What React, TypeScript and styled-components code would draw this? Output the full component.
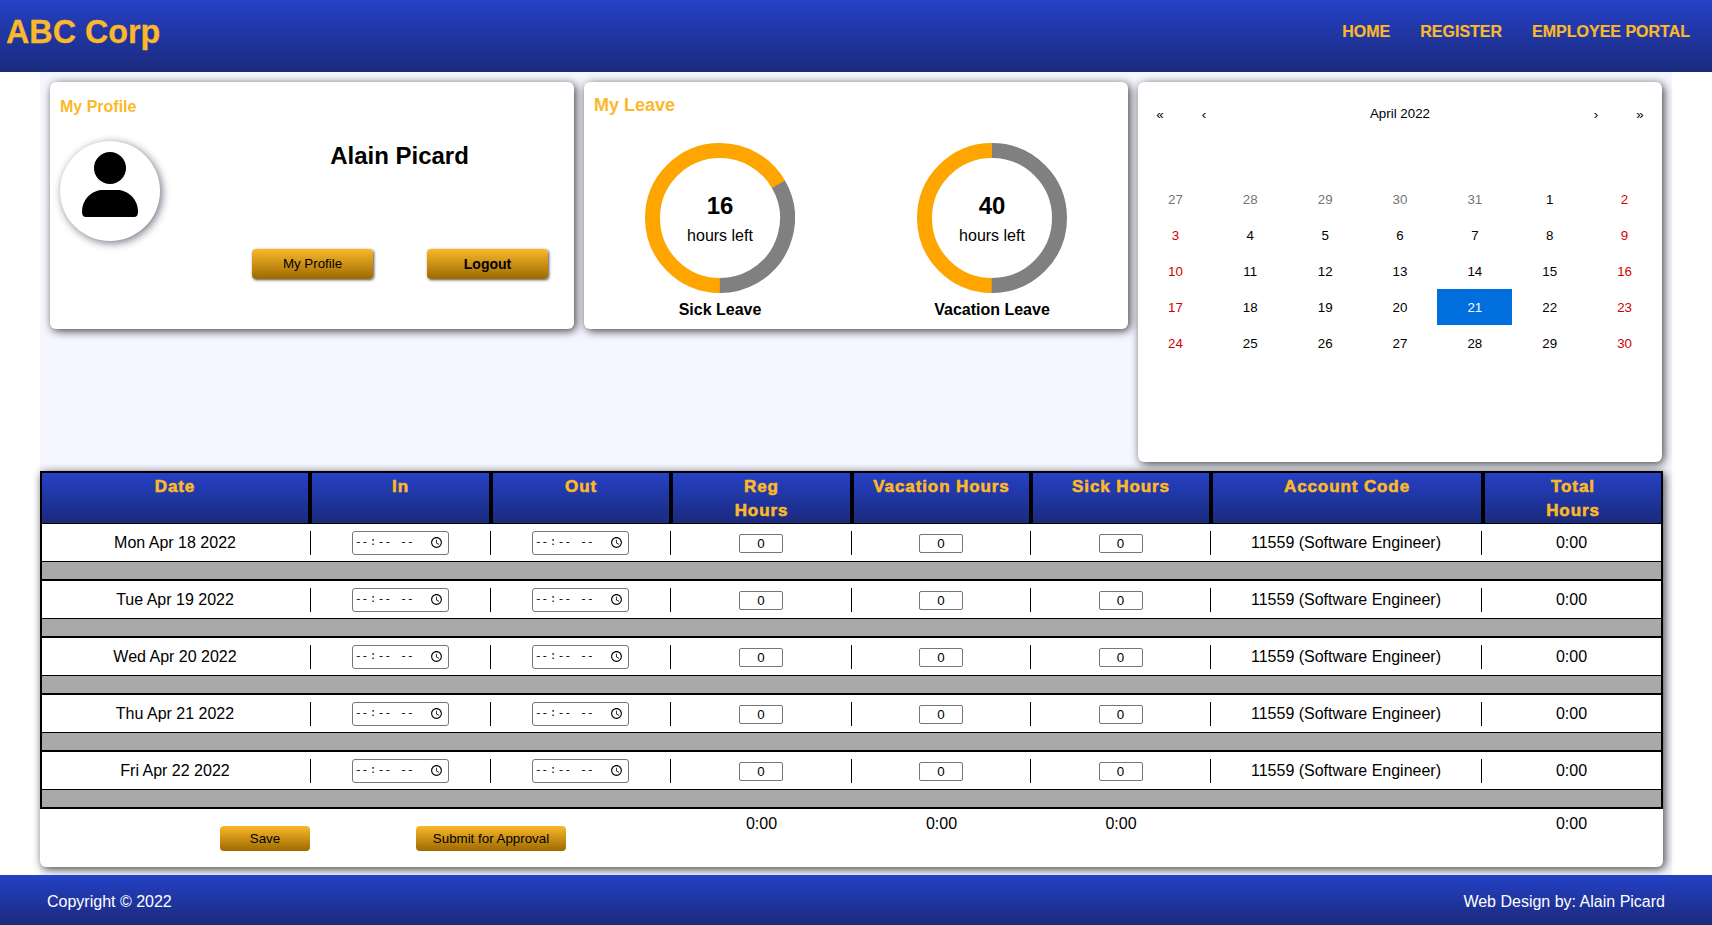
import React from "react";
import styled, { createGlobalStyle } from "styled-components";

const GlobalStyle = createGlobalStyle`
  html, body {
    margin: 0;
    padding: 0;
    background: #fff;
    font-family: "Liberation Sans", Arial, sans-serif;
  }
`;

const BLUE_GRADIENT = "linear-gradient(#2541c6, #1a2a7c)";
const GOLD_GRADIENT = "linear-gradient(#fbb829, #9c6a00)";
const GOLD = "#fbb829";
const HEAD_COLUMNS = "266px 181px 180px 181px 179px 180px 272px 180px";
const BODY_COLUMNS = "269px 180px 180px 181px 179px 180px 271px 179px";

const Page = styled.div`
  display: flex;
  flex-direction: column;
  height: 925px;
  overflow: hidden;
`;

const TopBar = styled.header`
  display: flex;
  justify-content: space-between;
  align-items: center;
  height: 72px;
  padding: 0 22px 0 6px;
  background: ${BLUE_GRADIENT};
  flex-shrink: 0;
`;

const Brand = styled.div`
  color: ${GOLD};
  font-size: 32.3px;
  font-weight: 700;
  margin-top: -8px;
  -webkit-text-stroke: 0.3px ${GOLD};
`;

const Nav = styled.nav`
  display: flex;
  gap: 30px;
  margin-top: -8px;
`;

const NavLink = styled.a`
  color: ${GOLD};
  font-size: 16px;
  font-weight: 700;
  -webkit-text-stroke: 0.2px ${GOLD};
`;

const Main = styled.main`
  flex: 1;
  margin: 0 40px;
  padding: 10px 10px 8px 0;
  background: #f5f6ff;
  display: flex;
  flex-direction: column;
  gap: 10px;
`;

const TopRow = styled.section`
  display: flex;
  align-items: flex-start;
  gap: 10px;
  padding-left: 10px;
`;

const Card = styled.div`
  background: #fff;
  border-radius: 6px;
  box-shadow: 2px 2px 10px rgba(0, 0, 0, 0.75);
`;

const ProfileCard = styled(Card)`
  width: 524px;
  height: 247px;
  padding: 16px 10px 0;
  box-sizing: border-box;
  display: grid;
  grid-template-columns: 192px 1fr;
  grid-template-rows: auto 1fr;
`;

const CardTitle = styled.h2`
  grid-column: 1 / -1;
  margin: 0;
  color: ${GOLD};
  font-size: 16px;
  line-height: 18px;
  font-weight: 700;
`;

const Avatar = styled.div`
  width: 100px;
  height: 100px;
  margin-top: 25px;
  border-radius: 50%;
  background: #fff;
  box-shadow: 2px 2px 8px rgba(0, 0, 30, 0.55);
`;

const ProfileRight = styled.div`
  display: flex;
  flex-direction: column;
  align-items: stretch;
  padding-right: 16px;
`;

const ProfileName = styled.div`
  text-align: center;
  font-size: 24px;
  font-weight: 700;
  line-height: 28px;
  margin: 26px 1px 0 0;
`;

const ProfileButtons = styled.div`
  display: flex;
  justify-content: space-between;
  margin-top: 79px;
`;

const GoldButton = styled.button<{ $bold?: boolean; $w: number; $h: number; $shadow?: boolean }>`
  width: ${p => p.$w}px;
  height: ${p => p.$h}px;
  padding: 0 0 1px;
  border: none;
  border-radius: 4px;
  background: ${GOLD_GRADIENT};
  color: #000;
  font-family: "Liberation Sans", Arial, sans-serif;
  font-size: ${p => (p.$bold ? 14 : 13.33)}px;
  font-weight: ${p => (p.$bold ? 700 : 400)};
  box-shadow: ${p => (p.$shadow ? "1px 1px 3px rgba(0, 0, 0, 0.7)" : "none")};
`;

const LeaveCard = styled(Card)`
  width: 544px;
  height: 247px;
  padding: 13px 10px 0;
  box-sizing: border-box;
`;

const LeaveTitle = styled(CardTitle)`
  font-size: 18px;
  line-height: 21px;
`;

const LeaveRow = styled.div`
  display: flex;
  margin-top: 27px;
  padding-left: 51px;
  gap: 122px;
`;

const LeaveItem = styled.div`
  display: flex;
  flex-direction: column;
  align-items: center;
  width: 150px;
`;

const Donut = styled.div`
  display: grid;
  width: 150px;
  height: 150px;
  & > * {
    grid-area: 1 / 1;
  }
`;

const DonutText = styled.div`
  display: flex;
  flex-direction: column;
  align-items: center;
  justify-content: center;
  padding-top: 1px;
`;

const DonutValue = styled.span`
  font-size: 24px;
  font-weight: 700;
  line-height: 28px;
`;

const DonutLabel = styled.span`
  font-size: 16px;
  line-height: 18px;
  margin-top: 7px;
`;

const LeaveName = styled.div`
  margin-top: 8px;
  font-size: 16px;
  font-weight: 700;
  line-height: 18px;
  white-space: nowrap;
`;

const CalendarCard = styled(Card)`
  width: 524px;
  height: 380px;
  padding-top: 9px;
  box-sizing: border-box;
`;

const CalendarNav = styled.div`
  display: flex;
  align-items: center;
  height: 44px;
  margin-bottom: 46px;
  font-size: 13.33px;
`;

const CalendarArrow = styled.span`
  width: 44px;
  text-align: center;
  padding-top: 3px;
`;

const CalendarLabel = styled.span`
  flex: 1;
  text-align: center;
`;

const DayGrid = styled.div`
  display: grid;
  grid-template-columns: repeat(7, 1fr);
  grid-auto-rows: 36px;
`;

const Day = styled.div<{ $kind: "normal" | "muted" | "weekend" | "today" }>`
  display: flex;
  align-items: center;
  justify-content: center;
  font-size: 13.33px;
  color: ${p => ({ normal: "#000", muted: "#757575", weekend: "#d10000", today: "#fff" }[p.$kind])};
  background: ${p => (p.$kind === "today" ? "#006edc" : "transparent")};
`;

const TableCard = styled(Card)`
  height: 396px;
  margin: -1px -1px 0 0;
  border-radius: 0 0 6px 6px;
  box-sizing: border-box;
`;

const TableHead = styled.div`
  display: grid;
  grid-template-columns: ${HEAD_COLUMNS};
  height: 53px;
  box-sizing: border-box;
  border: 2px solid #000;
  background: #000;
`;

const HeadCell = styled.div`
  background: ${BLUE_GRADIENT};
  border-left: 4px solid #000;
  color: ${GOLD};
  font-size: 17px;
  font-weight: 700;
  line-height: 24px;
  letter-spacing: 0.9px;
  text-align: center;
  padding-top: 2px;
  -webkit-text-stroke: 0.6px ${GOLD};
  &:first-child {
    border-left: none;
  }
`;

const Row = styled.div`
  display: grid;
  grid-template-columns: ${BODY_COLUMNS};
  align-items: center;
  height: 37px;
  border-left: 2px solid #000;
  border-right: 2px solid #000;
  box-sizing: border-box;
`;

const Cell = styled.div<{ $last?: boolean }>`
  height: 24px;
  display: flex;
  align-items: center;
  justify-content: center;
  font-size: 16px;
  border-right: ${p => (p.$last ? "none" : "1px solid #000")};
  &:first-child {
    padding-right: 2px;
  }
`;

const Spacer = styled.div`
  height: 17px;
  background: #a9a9a9;
  border: solid #000;
  border-width: 1px 2px 2px;
`;

const TimeInput = styled.input`
  width: 97px;
  height: 24px;
  box-sizing: border-box;
  padding: 1px 1px 1px 2px;
  border: 1px solid #767676;
  border-radius: 3px;
  font-family: "Liberation Sans", Arial, sans-serif;
  font-size: 13.33px;
  background: #fff;
  &::-webkit-datetime-edit {
    font-family: "Liberation Mono", monospace;
    font-size: 11px;
  }
  &::-webkit-datetime-edit-hour-field,
  &::-webkit-datetime-edit-minute-field,
  &::-webkit-datetime-edit-ampm-field {
    padding: 0;
  }
  &::-webkit-datetime-edit-text {
    padding: 0 1.5px;
  }
  &::-webkit-datetime-edit-ampm-field {
    margin-left: 3px;
  }
`;

const HourInput = styled.input`
  width: 44px;
  height: 19px;
  margin-top: 2px;
  box-sizing: border-box;
  padding: 0;
  border: 1px solid #767676;
  border-radius: 2px;
  font-family: "Liberation Sans", Arial, sans-serif;
  font-size: 13.33px;
  text-align: center;
  &::-webkit-inner-spin-button {
    appearance: none;
    margin: 0;
  }
`;

const TotalsRow = styled.div`
  display: grid;
  grid-template-columns: ${BODY_COLUMNS};
  padding: 6px 0 0 2px;
`;

const SaveSlot = styled.div`
  display: flex;
  justify-content: flex-end;
  padding: 11px 1px 0 0;
`;

const SubmitSlot = styled.div`
  grid-column: span 2;
  display: flex;
  justify-content: center;
  padding-top: 11px;
`;

const Total = styled.div`
  text-align: center;
  font-size: 16px;
  line-height: 18px;
`;

const EmptySlot = styled.div``;

const Footer = styled.footer`
  display: flex;
  justify-content: space-between;
  align-items: center;
  height: 50px;
  padding: 4px 47px 0;
  box-sizing: border-box;
  background: ${BLUE_GRADIENT};
  color: #fff;
  font-size: 16px;
  flex-shrink: 0;
`;

const PersonIcon = () => (
  <svg width="100" height="100" viewBox="0 0 100 100">
    <ellipse cx="50" cy="27" rx="16" ry="16" fill="#000" />
    <path d="M22 71 C22 57 33 49 43 49 H57 C67 49 78 57 78 71 Q78 76 74 76 H26 Q22 76 22 71 Z" fill="#000" />
  </svg>
);

// greyFrom is where the grey slice starts, in degrees from the top; it ends at the bottom
const Ring = ({ greyFrom }: { greyFrom: number }) => {
  const r = 67.5;
  const len = 2 * Math.PI * r;
  const greyLen = ((180 - greyFrom) / 360) * len;
  return (
    <svg width="150" height="150" viewBox="0 0 150 150">
      <circle
        cx="75"
        cy="75"
        r={r}
        fill="none"
        stroke="#ffa500"
        strokeWidth="15"
        strokeDasharray={`${len - greyLen} ${len}`}
        transform="rotate(90 75 75)"
      />
      <circle
        cx="75"
        cy="75"
        r={r}
        fill="none"
        stroke="#808080"
        strokeWidth="15"
        strokeDasharray={`${greyLen} ${len}`}
        transform={`rotate(${greyFrom - 90} 75 75)`}
      />
    </svg>
  );
};

const leaves = [
  { name: "Sick Leave", hours: 16, greyFrom: 60 },
  { name: "Vacation Leave", hours: 40, greyFrom: 0 },
];

const days: number[] = [27, 28, 29, 30, 31, ...Array.from({ length: 30 }, (_, i) => i + 1)];

const dayKind = (i: number) => {
  if (i < 5) return "muted";
  if (days[i] === 21) return "today";
  if (i % 7 === 0 || i % 7 === 6) return "weekend";
  return "normal";
};

const weekRows = ["Mon Apr 18 2022", "Tue Apr 19 2022", "Wed Apr 20 2022", "Thu Apr 21 2022", "Fri Apr 22 2022"];

const headers = [["Date"], ["In"], ["Out"], ["Reg", "Hours"], ["Vacation Hours"], ["Sick Hours"], ["Account Code"], ["Total", "Hours"]];

export default function App() {
  return (
    <Page>
      <GlobalStyle />
      <TopBar>
        <Brand>ABC Corp</Brand>
        <Nav>
          <NavLink>HOME</NavLink>
          <NavLink>REGISTER</NavLink>
          <NavLink>EMPLOYEE PORTAL</NavLink>
        </Nav>
      </TopBar>
      <Main>
        <TopRow>
          <ProfileCard>
            <CardTitle>My Profile</CardTitle>
            <Avatar>
              <PersonIcon />
            </Avatar>
            <ProfileRight>
              <ProfileName>Alain Picard</ProfileName>
              <ProfileButtons>
                <GoldButton $w={121} $h={30} $shadow>My Profile</GoldButton>
                <GoldButton $w={121} $h={30} $shadow $bold>Logout</GoldButton>
              </ProfileButtons>
            </ProfileRight>
          </ProfileCard>
          <LeaveCard>
            <LeaveTitle>My Leave</LeaveTitle>
            <LeaveRow>
              {leaves.map(l => (
                <LeaveItem key={l.name}>
                  <Donut>
                    <Ring greyFrom={l.greyFrom} />
                    <DonutText>
                      <DonutValue>{l.hours}</DonutValue>
                      <DonutLabel>hours left</DonutLabel>
                    </DonutText>
                  </Donut>
                  <LeaveName>{l.name}</LeaveName>
                </LeaveItem>
              ))}
            </LeaveRow>
          </LeaveCard>
          <CalendarCard>
            <CalendarNav>
              <CalendarArrow>«</CalendarArrow>
              <CalendarArrow>‹</CalendarArrow>
              <CalendarLabel>April 2022</CalendarLabel>
              <CalendarArrow>›</CalendarArrow>
              <CalendarArrow>»</CalendarArrow>
            </CalendarNav>
            <DayGrid>
              {days.map((d, i) => (
                <Day key={i} $kind={dayKind(i)}>{d}</Day>
              ))}
            </DayGrid>
          </CalendarCard>
        </TopRow>
        <TableCard>
          <TableHead>
            {headers.map(h => (
              <HeadCell key={h[0]}>
                {h.map(line => (
                  <div key={line}>{line}</div>
                ))}
              </HeadCell>
            ))}
          </TableHead>
          {weekRows.map(date => (
            <React.Fragment key={date}>
              <Row>
                <Cell>{date}</Cell>
                <Cell><TimeInput type="time" /></Cell>
                <Cell><TimeInput type="time" /></Cell>
                <Cell><HourInput type="number" defaultValue={0} /></Cell>
                <Cell><HourInput type="number" defaultValue={0} /></Cell>
                <Cell><HourInput type="number" defaultValue={0} /></Cell>
                <Cell>11559 (Software Engineer)</Cell>
                <Cell $last>0:00</Cell>
              </Row>
              <Spacer />
            </React.Fragment>
          ))}
          <TotalsRow>
            <SaveSlot>
              <GoldButton $w={90} $h={25}>Save</GoldButton>
            </SaveSlot>
            <SubmitSlot>
              <GoldButton $w={150} $h={25}>Submit for Approval</GoldButton>
            </SubmitSlot>
            <Total>0:00</Total>
            <Total>0:00</Total>
            <Total>0:00</Total>
            <EmptySlot />
            <Total>0:00</Total>
          </TotalsRow>
        </TableCard>
      </Main>
      <Footer>
        <span>Copyright © 2022</span>
        <span>Web Design by: Alain Picard</span>
      </Footer>
    </Page>
  );
}
